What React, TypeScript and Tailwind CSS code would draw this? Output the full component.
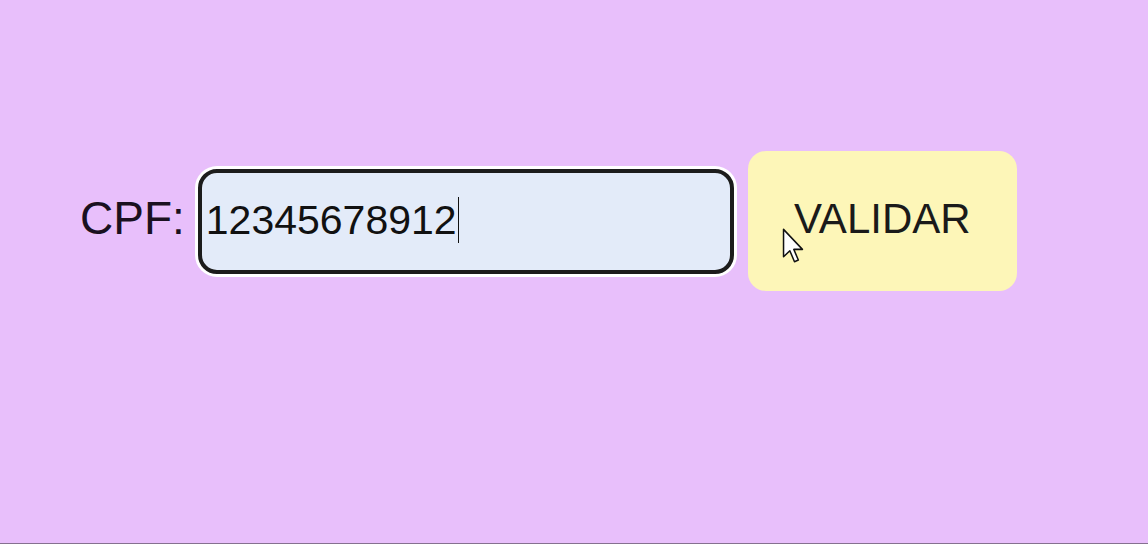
import React from "react";

export default function App() {
  const cpf = "12345678912";

  return (
    <main
      className="relative h-[544px] w-full bg-[#e8bffb] border-b border-[#857090] overflow-hidden"
      style={{ fontFamily: '"Liberation Sans", Arial, sans-serif' }}
    >
      <div className="flex flex-row items-center pl-[80px] pt-[151px]">
        <label className="pb-[6px] text-[46px] leading-none text-[#1a1020]">CPF:</label>

        {/* campo do CPF */}
        <div className="ml-[10px] rounded-[22px] bg-white p-[3px]">
          <div className="flex h-[105px] w-[536px] items-center rounded-[19px] border-[4px] border-[#1c1c1c] bg-[#e3ebf9] pl-[4px] pb-[2px]">
            <span className="text-[41px] leading-none text-[#111]">{cpf}</span>
            <span className="ml-[1px] h-[46px] w-[1px] bg-[#111]"></span>
          </div>
        </div>

        <button className="ml-[11px] flex h-[140px] w-[269px] items-center justify-center rounded-[18px] bg-[#fdf6b8] pb-[5px] text-[42px] leading-none text-[#1a1a1a]">
          VALIDAR
        </button>
      </div>

      {/* ponteiro do mouse */}
      <svg
        className="absolute left-[782px] top-[228px]"
        width="25"
        height="37"
        viewBox="0 0 18 27"
      >
        <path
          d="M1 1 L1 21 L5.6 16.6 L9 24.6 L11.8 23.4 L8.5 15.6 L14.8 15.6 Z"
          fill="#ffffff"
          stroke="#111111"
          strokeWidth="1.1"
          strokeLinejoin="round"
        />
      </svg>
    </main>
  );
}
